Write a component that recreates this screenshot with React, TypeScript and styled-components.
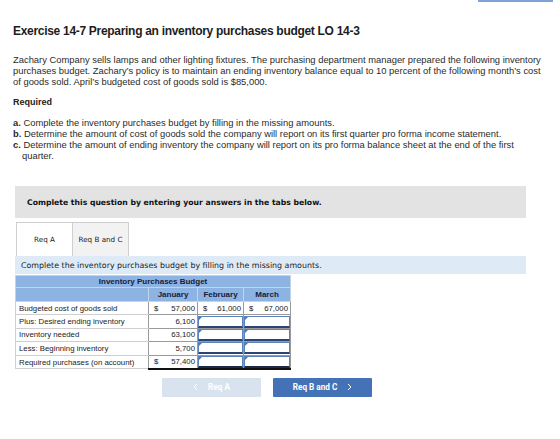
import { createGlobalStyle, styled } from "styled-components"

const GlobalStyle = createGlobalStyle`
  html, body {
    margin: 0;
    padding: 0;
    background: #fff;
  }
  body {
    font-family: "Liberation Sans", Arial, sans-serif;
    color: #222;
  }
  p { margin: 0; }
`

const Page = styled.div`
  width: 560px;
  height: 439px;
  overflow: hidden;
  position: relative;
`

const TopTab = styled.div`
  position: absolute;
  top: 0;
  left: 478px;
  width: 75px;
  height: 2px;
  background: #7ea3d6;
`

const Content = styled.div`
  padding: 23px 12px 0 13px;
`

const Title = styled.h1`
  margin: 0;
  font-size: 12px;
  font-weight: 700;
  letter-spacing: -0.3px;
  color: #1d1d1d;
  line-height: 16px;
`

const Intro = styled.p`
  margin-top: 15px !important;
  font-size: 9.4px;
  line-height: 11px;
  color: #2b2b2b;
`

const Required = styled.h2`
  margin: 10px 0 0;
  font-size: 9px;
  font-weight: 700;
  line-height: 11px;
  color: #222;
`

const ReqList = styled.ol`
  margin: 9px 0 0;
  padding: 0;
  list-style: none;
  font-size: 9.4px;
  line-height: 11px;
  color: #2b2b2b;
`

const ReqItem = styled.li`
  padding-left: 9px;
  text-indent: -9px;
  b { font-weight: 700; }
`

const Workspace = styled.div`
  margin: 25px 0 0 2px;
  width: 511px;
  font-family: "DejaVu Sans", Verdana, sans-serif;
`

const Instruction = styled.div`
  height: 32px;
  background: #e3e3e3;
  display: flex;
  align-items: center;
  padding: 0 12px;
  font-size: 7.7px;
  font-weight: 700;
  color: #111;
`

const Tabs = styled.div`
  display: flex;
  margin: 4px 0 0 1px;
`

const Tab = styled.div<{ $active?: boolean }>`
  width: 57px;
  height: 34px;
  box-sizing: border-box;
  border: 1px solid #cfcfcf;
  border-bottom: none;
  margin-left: ${p => (p.$active ? 0 : -1)}px;
  background: ${p => (p.$active ? "#fff" : "#f2f2f2")};
  display: flex;
  align-items: center;
  justify-content: center;
  font-size: 7.2px;
  color: #222;
`

const InfoBar = styled.div`
  height: 18px;
  background: #deebf7;
  display: flex;
  align-items: center;
  padding: 0 6px;
  font-size: 7.9px;
  color: #222;
`

const Budget = styled.table`
  margin-top: 1px;
  border-collapse: collapse;
  font-family: "Liberation Sans", Arial, sans-serif;
  font-size: 7.8px;
  color: #222;
  table-layout: fixed;
  width: 275px;
`

const HeadCell = styled.th<{ $tall?: boolean }>`
  background: #8db3e2;
  border: 1px solid #c4d3e8;
  height: ${p => (p.$tall ? 13 : 11)}px;
  padding: 0;
  font-weight: 700;
  font-size: 8px;
  text-align: center;
  color: #16203a;
`

const LabelCell = styled.td`
  border: 1px solid #cfcfcf;
  border-right: 1px solid #9a9a9a;
  height: 12.4px;
  padding: 0 3px;
  white-space: nowrap;
`

const AmountCell = styled.td<{ $total?: boolean }>`
  border: 1px solid #9a9a9a;
  border-bottom: ${p => (p.$total ? "2px solid #111" : "1px solid #9a9a9a")};
  height: 12.4px;
  padding: 0 2px 0 5px;
  white-space: nowrap;
`

const Amount = styled.span`
  display: flex;
  justify-content: space-between;
`

const Right = styled.span`
  display: block;
  text-align: right;
`

const InputCell = styled.td<{ $total?: boolean }>`
  padding: 0;
  height: 12.4px;
  border: 1px solid #9a9a9a;
  border-bottom: ${p => (p.$total ? "2px solid #111" : "1px solid #9a9a9a")};
`

const Field = styled.div<{ $dark?: boolean }>`
  position: relative;
  height: 12px;
  box-sizing: border-box;
  border: 1px solid #5a82bd;
  border-bottom: 2px solid ${p => (p.$dark ? "#1d2a44" : "#2c4473")};
  background: #fff;
  &::before {
    content: "";
    position: absolute;
    top: 0;
    left: 0;
    border-top: 3px solid #3d7ad0;
    border-right: 3px solid transparent;
  }
`

const Nav = styled.div`
  display: flex;
  gap: 12px;
  margin: 8px 0 0 147px;
  font-family: Roboto, "Liberation Sans", sans-serif;
`

const NavButton = styled.button<{ $disabled?: boolean }>`
  width: 99px;
  height: 19px;
  border: none;
  border-radius: 1px;
  background: ${p => (p.$disabled ? "#d9e3f0" : "#4472b7")};
  color: #fff;
  font-family: inherit;
  font-size: 8.2px;
  font-weight: 700;
  display: flex;
  align-items: center;
  justify-content: center;
  gap: 10px;
  padding: 0;
`

const Chevron = ({ dir }: { dir: "left" | "right" }) => (
  <svg width="5" height="8" viewBox="0 0 5 8">
    <path
      d={dir === "left" ? "M4 1 L1 4 L4 7" : "M1 1 L4 4 L1 7"}
      fill="none"
      stroke="#fff"
      strokeWidth="1"
    />
  </svg>
)

const rows = [
  { label: "Budgeted cost of goods sold" },
  { label: "Plus: Desired ending inventory", jan: "6,100" },
  { label: "Inventory needed", jan: "63,100" },
  { label: "Less: Beginning inventory", jan: "5,700" },
  { label: "Required purchases (on account)", jan: "57,400", dollar: true },
]

export default function App() {
  return (
    <Page>
      <GlobalStyle />
      <TopTab />
      <Content>
        <Title>Exercise 14-7 Preparing an inventory purchases budget LO 14-3</Title>
        <Intro>
          Zachary Company sells lamps and other lighting fixtures. The purchasing department manager prepared the following
          inventory purchases budget. Zachary’s policy is to maintain an ending inventory balance equal to 10 percent of the
          following month’s cost of goods sold. April’s budgeted cost of goods sold is $85,000.
        </Intro>
        <Required>Required</Required>
        <ReqList>
          <ReqItem><b>a.</b> Complete the inventory purchases budget by filling in the missing amounts.</ReqItem>
          <ReqItem><b>b.</b> Determine the amount of cost of goods sold the company will report on its first quarter pro forma income statement.</ReqItem>
          <ReqItem><b>c.</b> Determine the amount of ending inventory the company will report on its pro forma balance sheet at the end of the first quarter.</ReqItem>
        </ReqList>

        <Workspace>
          <Instruction>Complete this question by entering your answers in the tabs below.</Instruction>
          <Tabs>
            <Tab $active>Req A</Tab>
            <Tab>Req B and C</Tab>
          </Tabs>
          <InfoBar>Complete the inventory purchases budget by filling in the missing amounts.</InfoBar>

          <Budget>
            <colgroup>
              <col style={{ width: 133 }} />
              <col style={{ width: 49 }} />
              <col style={{ width: 46 }} />
              <col style={{ width: 47 }} />
            </colgroup>
            <thead>
              <tr>
                <HeadCell colSpan={4}>Inventory Purchases Budget</HeadCell>
              </tr>
              <tr>
                <HeadCell $tall />
                <HeadCell $tall>January</HeadCell>
                <HeadCell $tall>February</HeadCell>
                <HeadCell $tall>March</HeadCell>
              </tr>
            </thead>
            <tbody>
              <tr>
                <LabelCell>{rows[0].label}</LabelCell>
                <AmountCell><Amount><span>$</span><span>57,000</span></Amount></AmountCell>
                <AmountCell><Amount><span>$</span><span>61,000</span></Amount></AmountCell>
                <AmountCell><Amount><span>$</span><span>67,000</span></Amount></AmountCell>
              </tr>
              {rows.slice(1).map((r, i) => {
                const total = i === rows.length - 2
                return (
                  <tr key={r.label}>
                    <LabelCell>{r.label}</LabelCell>
                    <AmountCell $total={total}>
                      {r.dollar ? (
                        <Amount><span>$</span><span>{r.jan}</span></Amount>
                      ) : (
                        <Right>{r.jan}</Right>
                      )}
                    </AmountCell>
                    <InputCell $total={total}><Field $dark={total} /></InputCell>
                    <InputCell $total={total}><Field $dark={total} /></InputCell>
                  </tr>
                )
              })}
            </tbody>
          </Budget>

          <Nav>
            <NavButton $disabled><Chevron dir="left" />Req A</NavButton>
            <NavButton>Req B and C<Chevron dir="right" /></NavButton>
          </Nav>
        </Workspace>
      </Content>
    </Page>
  )
}
